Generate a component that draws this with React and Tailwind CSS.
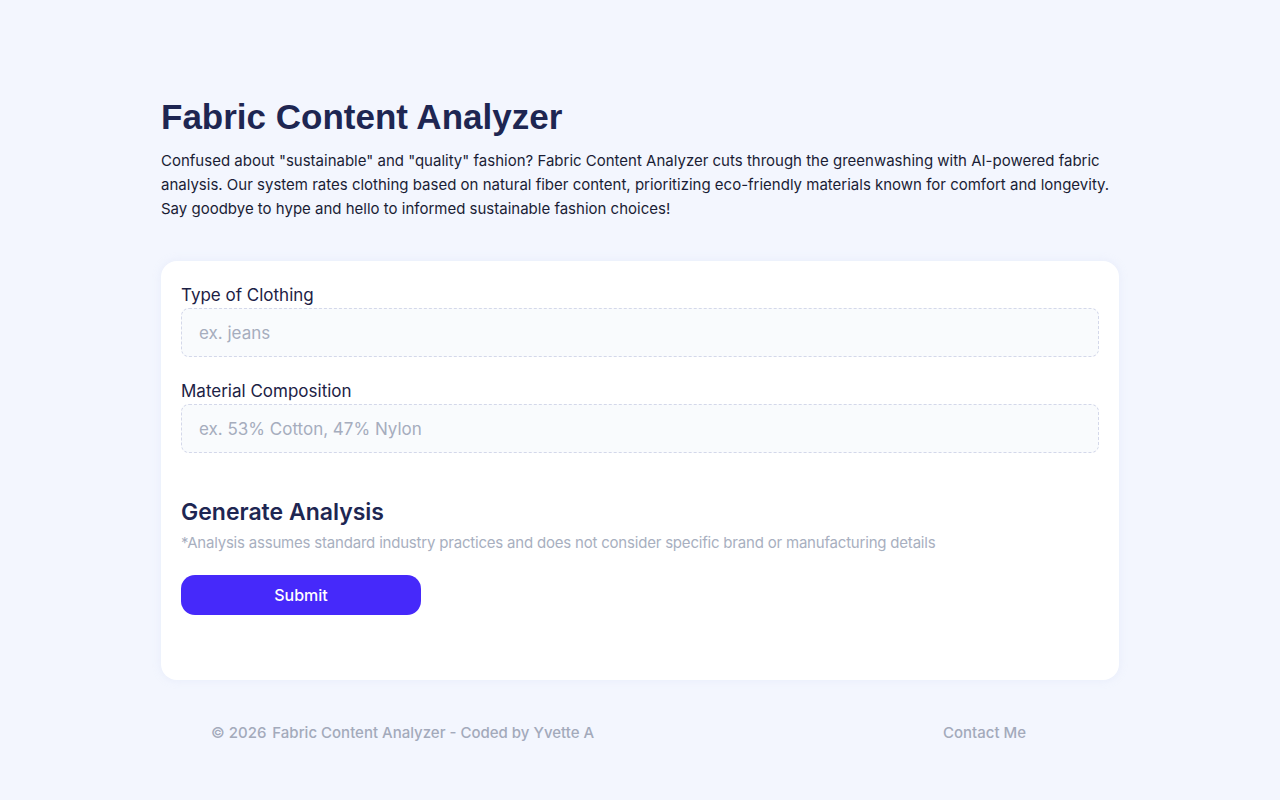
export default function App() {
  const font = { fontFamily: '"Inter", "DejaVu Sans", sans-serif' };

  return (
    <div className="min-h-screen w-full bg-[#f3f6fe] text-[#1c2145]" style={font}>
      <div className="mx-auto w-[958px] pt-[96px]">
        <h1 className="text-[35px] leading-[42px] font-bold text-[#1e2652] [font-family:'Liberation_Sans',Arial,sans-serif]">
          Fabric Content Analyzer
        </h1>
        <p className="mt-[11px] text-[15px] leading-[24px] text-[#1a1d35]">
          Confused about "sustainable" and "quality" fashion? Fabric Content Analyzer cuts through the greenwashing with AI-powered fabric analysis. Our system rates clothing based on natural fiber content, prioritizing eco-friendly materials known for comfort and longevity. Say goodbye to hype and hello to informed sustainable fashion choices!
        </p>

        <form
          onSubmit={(e) => e.preventDefault()}
          className="mt-[40px] h-[419px] rounded-2xl bg-white px-5 pt-[22px] shadow-[0_0_8px_rgba(200,210,240,0.25)]"
        >
          <label className="block text-[17px] leading-[24px] text-[#1c2145]">Type of Clothing</label>
          <input
            type="text"
            placeholder="ex. jeans"
            className="mt-[1px] h-[49px] w-full rounded-lg border border-dashed border-[#d4d8ea] bg-[#f9fbfd] px-[17px] text-[17px] placeholder:text-[#a6adbd] focus:outline-none"
          />

          <label className="mt-[22px] block text-[17px] leading-[24px] text-[#1c2145]">Material Composition</label>
          <input
            type="text"
            placeholder="ex. 53% Cotton, 47% Nylon"
            className="mt-[1px] h-[49px] w-full rounded-lg border border-dashed border-[#d4d8ea] bg-[#f9fbfd] px-[17px] text-[17px] placeholder:text-[#a6adbd] focus:outline-none"
          />

          <h2 className="mt-[44px] text-[23px] leading-[30px] font-semibold text-[#1e2652]">Generate Analysis</h2>
          <p className="mt-[5px] text-[15px] leading-[22px] tracking-[-0.2px] text-[#a8afc0]">
            *Analysis assumes standard industry practices and does not consider specific brand or manufacturing details
          </p>

          <button
            type="submit"
            className="mt-[21px] h-[40px] w-[240px] rounded-[14px] bg-[#4629fa] text-[16px] font-medium text-white"
          >
            Submit
          </button>
        </form>

        <footer className="flex items-center justify-between px-[50px] pt-[42px] text-[15px] font-medium text-[#a3aabb]">
          <div className="flex gap-[6px]">
            <span>© 2026</span>
            <span>Fabric Content Analyzer - Coded by Yvette A</span>
          </div>
          <a href="#" className="mr-[43px]">Contact Me</a>
        </footer>
      </div>
    </div>
  );
}
